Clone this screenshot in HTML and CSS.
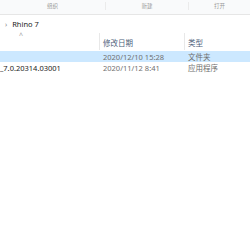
FILE: index.html
```html
<!DOCTYPE html>
<html>
<head>
<meta charset="utf-8">
<link rel="stylesheet" href="styles.css">
</head>
<body>
<div class="ribbon">
  <div class="group g1">组织</div>
  <div class="group g2">新建</div>
  <div class="group g3">打开</div>
</div>
<div class="address">
  <span class="chev">›</span>
  <span class="crumb">Rhino 7</span>
</div>
<div class="header">
  <div class="col c1"><span class="sort">^</span></div>
  <div class="col c2">修改日期</div>
  <div class="col c3">类型</div>
</div>
<div class="row selected">
  <div class="col c1"></div>
  <div class="col c2 date">2020/12/10 15:28</div>
  <div class="col c3">文件夹</div>
</div>
<div class="row">
  <div class="col c1 name">_7.0.20314.03001</div>
  <div class="col c2 date">2020/11/12 8:41</div>
  <div class="col c3">应用程序</div>
</div>
</body>
</html>
```
FILE: styles.css
```css
html, body {
  margin: 0;
  padding: 0;
  background: #ffffff;
  font-family: "Segoe UI", "Noto Sans", "Noto Sans CJK SC", sans-serif;
  font-size: 7.5px;
  color: #1a1a1a;
  width: 250px;
  height: 250px;
  overflow: hidden;
}
.ribbon {
  display: flex;
  height: 15px;
  background: #f9fafb;
  border-bottom: 1px solid #e6e6e6;
  box-sizing: border-box;
}
.group {
  display: flex;
  align-items: center;
  justify-content: center;
  font-size: 5.5px;
  color: #9a9a9a;
  margin: 2px 0 4px;
}
.g1 { width: 105px; border-right: 1px solid #ebebeb; }
.g2 { width: 82px; border-right: 1px solid #ebebeb; }
.g3 { flex: 1; }
.address {
  height: 16px;
  display: flex;
  align-items: center;
  padding-left: 5px;
  padding-top: 2px;
  box-sizing: border-box;
}
.chev {
  color: #888;
  font-size: 7px;
  margin-right: 5px;
}
.crumb { color: #222; }
.header {
  display: flex;
  height: 20px;
  align-items: stretch;
}
.header .col {
  display: flex;
  align-items: center;
  color: #4c607a;
  padding-top: 2px;
}
.header .c1 { position: relative; }
.sort {
  position: absolute;
  left: 19px;
  top: 0px;
  font-size: 7px;
  color: #9a9a9a;
}
.header .c2, .header .c3 {
  border-left: 1px solid #e8e8e8;
  margin: 2px 0 1px;
  padding-left: 3px;
}
.c1 { width: 99px; }
.c2 { width: 85px; box-sizing: border-box; }
.c3 { flex: 1; padding-left: 4px; }
.row {
  display: flex;
  height: 11px;
  align-items: center;
  color: #6d6d6d;
}
.row .c2 { padding-left: 4px; }
.row.selected { background: #cce8ff; }
.name { color: #222; }
.date { color: #707070; }
```
